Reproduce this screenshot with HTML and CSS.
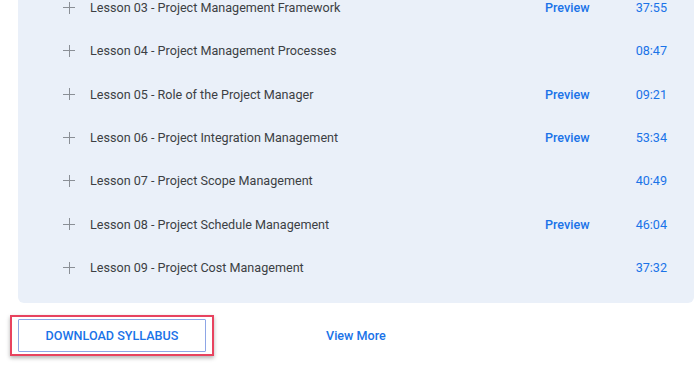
FILE: index.html
```html
<!DOCTYPE html>
<html>
<head>
<meta charset="utf-8">
<link rel="stylesheet" href="styles.css">
</head>
<body>
<div class="page">
  <div class="panel">
    <div class="row"><span class="plus"></span><span class="title">Lesson 03 - Project Management Framework</span><a class="preview">Preview</a><span class="time">37:55</span></div>
    <div class="row"><span class="plus"></span><span class="title">Lesson 04 - Project Management Processes</span><span class="preview"></span><span class="time">08:47</span></div>
    <div class="row"><span class="plus"></span><span class="title">Lesson 05 - Role of the Project Manager</span><a class="preview">Preview</a><span class="time">09:21</span></div>
    <div class="row"><span class="plus"></span><span class="title">Lesson 06 - Project Integration Management</span><a class="preview">Preview</a><span class="time">53:34</span></div>
    <div class="row"><span class="plus"></span><span class="title">Lesson 07 - Project Scope Management</span><span class="preview"></span><span class="time">40:49</span></div>
    <div class="row"><span class="plus"></span><span class="title">Lesson 08 - Project Schedule Management</span><a class="preview">Preview</a><span class="time">46:04</span></div>
    <div class="row"><span class="plus"></span><span class="title">Lesson 09 - Project Cost Management</span><span class="preview"></span><span class="time">37:32</span></div>
  </div>
  <div class="actions">
    <div class="highlight"><button class="download">DOWNLOAD SYLLABUS</button></div>
    <a class="more">View More</a>
  </div>
</div>
</body>
</html>
```

FILE: styles.css
```css
html, body {
  margin: 0;
  padding: 0;
  background: #ffffff;
  font-family: Roboto, "Liberation Sans", sans-serif;
  font-size: 12.6px;
}
.page {
  width: 700px;
  height: 366px;
  overflow: hidden;
  padding-left: 18px;
  box-sizing: border-box;
}
.panel {
  width: 676px;
  margin-top: -14px;
  background: #eaf0f9;
  border-radius: 0 0 6px 6px;
  padding: 0 27px 14px 45px;
  box-sizing: border-box;
}
.row {
  display: grid;
  grid-template-columns: 12px 1fr 46px 61px;
  column-gap: 15px;
  align-items: center;
  height: 43.33px;
}
.plus {
  position: relative;
  width: 12px;
  height: 12px;
}
.plus::before, .plus::after {
  content: "";
  position: absolute;
  background: #8a8f96;
}
.plus::before {
  left: 0; right: 0; top: 5.5px; height: 1px;
}
.plus::after {
  top: 0; bottom: 0; left: 5.5px; width: 1px;
}
.title {
  color: #3c3f44;
}
.preview {
  color: #1a73e8;
  font-weight: 500;
}
.time {
  color: #1a73e8;
  text-align: right;
  justify-self: end;
}
.actions {
  display: flex;
  align-items: center;
  margin-top: 12px;
  margin-left: -8px;
}
.highlight {
  border: 2px solid #e8435f;
  padding: 2px 6px;
  box-shadow: 0 2px 4px rgba(0,0,0,0.3);
}
.download {
  display: block;
  width: 188px;
  height: 33px;
  background: #ffffff;
  border: 1px solid #8ea6e6;
  border-radius: 1px;
  color: #1a73e8;
  font-family: Roboto, "Liberation Sans", sans-serif;
  font-size: 12.6px;
  font-weight: 500;
  padding: 0;
}
.more {
  margin-left: 112px;
  color: #1a73e8;
  font-weight: 500;
}
```
